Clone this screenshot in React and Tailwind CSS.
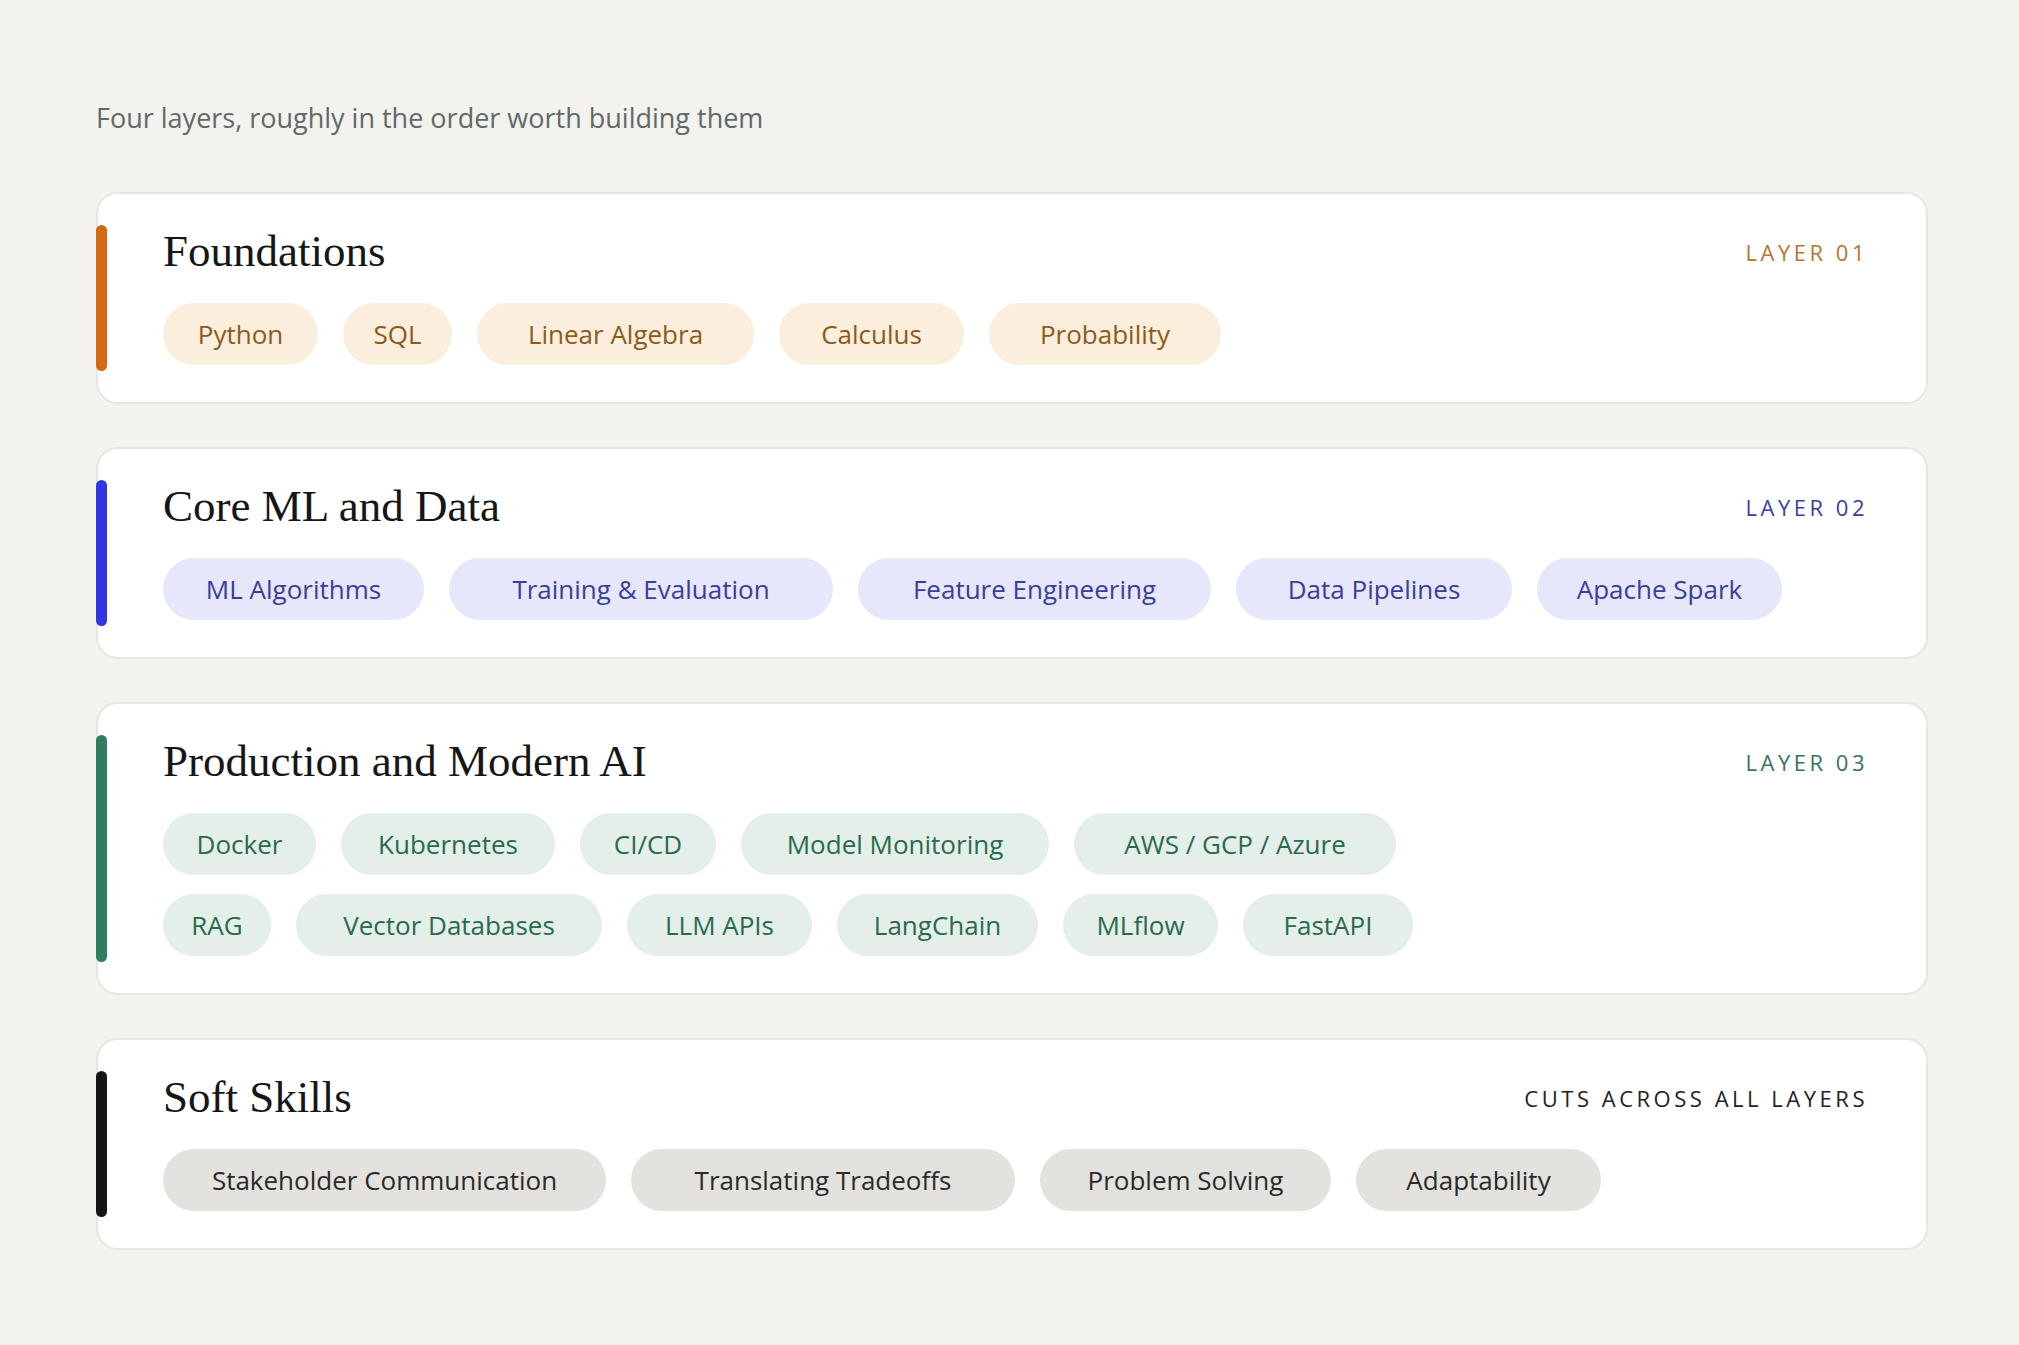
const S = 1.2876;
const layers = [
  { title: "Foundations", label: "LAYER 01", bar: "bg-[#d36a12]", chip: "bg-[#fbeedc] text-[#8b5a1b]", lab: "text-[#b8742c]",
    rows: [[["Python", 120], ["SQL", 85], ["Linear Algebra", 215], ["Calculus", 144], ["Probability", 180]]] },
  { title: "Core ML and Data", label: "LAYER 02", bar: "bg-[#2f37e3]", chip: "bg-[#e6e7fb] text-[#38409a]", lab: "text-[#3b409f]",
    rows: [[["ML Algorithms", 203], ["Training & Evaluation", 298], ["Feature Engineering", 274], ["Data Pipelines", 214], ["Apache Spark", 190]]] },
  { title: "Production and Modern AI", label: "LAYER 03", bar: "bg-[#2e7d5e]", chip: "bg-[#e3efe8] text-[#2a6a4c]", lab: "text-[#3a7259]",
    rows: [
      [["Docker", 119], ["Kubernetes", 166], ["CI/CD", 106], ["Model Monitoring", 239], ["AWS / GCP / Azure", 250]],
      [["RAG", 84], ["Vector Databases", 238], ["LLM APIs", 144], ["LangChain", 156], ["MLflow", 120], ["FastAPI", 132]],
    ] },
  { title: "Soft Skills", label: "CUTS ACROSS ALL LAYERS", bar: "bg-[#161616]", chip: "bg-[#e4e2de] text-[#2a2a2a]", lab: "text-[#222]",
    rows: [[["Stakeholder Communication", 344], ["Translating Tradeoffs", 298], ["Problem Solving", 226], ["Adaptability", 190]]] },
];

function Chips({ l }) {
  return (
    <div className="flex flex-col gap-y-[19px]">
      {l.rows.map((r, i) => (
        <div key={i} className="flex gap-x-[25px]">
          {r.map(([t, w]) => (
            <span key={t} style={{ width: Math.round(w * S) }} className={`h-[62px] rounded-full flex items-center justify-center whitespace-nowrap text-[26px] ${l.chip}`}>{t}</span>
          ))}
        </div>
      ))}
    </div>
  );
}

export default function App() {
  return (
    <div className="min-h-[1345px] bg-[#f3f2ee] px-[96px] pt-[98px] pb-[90px]" style={{ fontFamily: '"Open Sans", "Noto Sans", sans-serif' }}>
      <p className="text-[27px] text-[#5f6a66] leading-[40px] mb-[54px]">Four layers, roughly in the order worth building them</p>
      <div className="flex flex-col gap-[43px] w-[1832px]">
        {layers.map((l) => (
          <div key={l.title} className="relative bg-white border-2 border-[#e8e6e1] rounded-[22px] pl-[65px] pr-[58px] pt-[30px] pb-[37px]">
            <div className={`absolute left-[-2px] top-[31px] bottom-[31px] w-[11px] rounded-full ${l.bar}`} />
            <div className="flex items-center justify-between h-[56px] mb-[23px]">
              <h2 className="text-[45px] text-[#161616]" style={{ fontFamily: '"Liberation Serif", "DejaVu Serif", serif' }}>{l.title}</h2>
              <span className={`text-[22px] tracking-[0.16em] ${l.lab}`}>{l.label}</span>
            </div>
            <Chips l={l} />
          </div>
        ))}
      </div>
    </div>
  );
}
